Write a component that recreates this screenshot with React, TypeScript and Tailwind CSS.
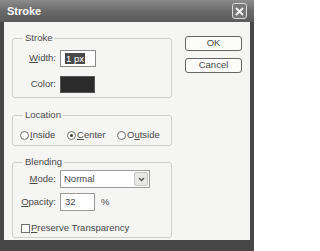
import type { ReactNode } from "react";

const FONT = { fontFamily: '"Liberation Sans", Arial, sans-serif' };
const FIELDSET = "rounded-[3px] border border-[#cdcdca] px-0";
const LEGEND = "ml-[10px] px-[2px] leading-[12px] text-[#4a4a4a]";
const LABEL = "w-[43px] shrink-0 text-right";

function U({ children }: { children: ReactNode }) {
  return <span className="underline decoration-[1px] underline-offset-[1px]">{children}</span>;
}

function Radio({ on }: { on?: boolean }) {
  return (
    <span className="flex h-[9px] w-[9px] shrink-0 items-center justify-center rounded-full border border-[#707070] bg-white">
      {on && <span className="h-[3px] w-[3px] rounded-full bg-[#3a3a3a]" />}
    </span>
  );
}

function Button({ children }: { children: ReactNode }) {
  return (
    <button className="flex h-[15px] w-[57px] items-center justify-center rounded-[3px] border border-[#666] bg-[#fbfbfa] text-[#4a4a4a]">
      {children}
    </button>
  );
}

export default function App() {
  return (
    <div
      style={FONT}
      className="flex h-[251px] w-[254px] flex-col bg-[#474747] px-[4px] pb-[11px] text-[9.5px] text-[#474747]"
    >
      {/* title bar */}
      <div className="-mx-[4px] flex h-[22px] shrink-0 items-center justify-between bg-gradient-to-b from-[#8c8c8c] via-[#6a6a6a] to-[#5a5a5a] pl-[7px] pr-[7px]">
        <span className="text-[11px] font-bold text-white">Stroke</span>
        <span className="flex h-[16px] w-[15px] items-center justify-center rounded-[3px] border border-[#dcdcdc] bg-[#777]">
          <svg width="9" height="9" viewBox="0 0 9 9">
            <path d="M1 1 L8 8 M8 1 L1 8" stroke="#f4f4f4" strokeWidth="1.8" />
          </svg>
        </span>
      </div>

      {/* client area */}
      <div className="flex flex-1 bg-[#f5f5f3] pl-[8px] pt-[10px]">
        <div className="flex w-[160px] flex-col">
          <fieldset className={`${FIELDSET} pb-[4px]`}>
            <legend className={LEGEND}>Stroke</legend>
            <div className="mt-[6px] flex items-center gap-[4px]">
              <span className={LABEL}>
                <U>W</U>idth:
              </span>
              <span className="flex h-[17px] w-[36px] items-center border border-[#8a8a8a] bg-white pl-[4px]">
                <span className="bg-[#4a4a4a] px-[1px] leading-[11px] text-white">1 px</span>
              </span>
            </div>
            <div className="mt-[9px] flex items-center gap-[4px]">
              <span className={LABEL}>Color:</span>
              <span className="h-[17px] w-[35px] border border-[#555] bg-[#2b2b2b]" />
            </div>
          </fieldset>

          <fieldset className={`${FIELDSET} mt-[11px] pb-[4px]`}>
            <legend className={LEGEND}>Location</legend>
            <div className="mt-[8px] flex h-[12px] items-center pl-[7px]">
              <label className="flex w-[47px] items-center gap-[1px]">
                <Radio />
                <span>
                  <U>I</U>nside
                </span>
              </label>
              <label className="flex w-[50px] items-center gap-[1px]">
                <Radio on />
                <span>
                  <U>C</U>enter
                </span>
              </label>
              <label className="flex items-center gap-[1px]">
                <Radio />
                <span>
                  O<U>u</U>tside
                </span>
              </label>
            </div>
          </fieldset>

          <fieldset className={`${FIELDSET} mt-[10px] pb-[3px]`}>
            <legend className={LEGEND}>Blending</legend>
            <div className="mt-[2px] flex items-center gap-[4px]">
              <span className={LABEL}>
                <U>M</U>ode:
              </span>
              <span className="flex h-[18px] w-[90px] items-center justify-between border border-[#9a9a9a] bg-white pl-[3px] pr-[1px]">
                <span>Normal</span>
                <span className="flex h-[14px] w-[14px] items-center justify-center rounded-[2px] border border-[#c4c4c4] bg-[#e8e8e6]">
                  <svg width="7" height="5" viewBox="0 0 7 5">
                    <path d="M1 1 L3.5 3.5 L6 1" fill="none" stroke="#555" strokeWidth="1.4" />
                  </svg>
                </span>
              </span>
            </div>
            <div className="mt-[5px] flex items-center gap-[4px]">
              <span className={LABEL}>
                <U>O</U>pacity:
              </span>
              <span className="flex h-[18px] w-[35px] items-center border border-[#9a9a9a] bg-white pl-[4px]">32</span>
              <span className="ml-[2px]">%</span>
            </div>
            <div className="mt-[11px] flex h-[12px] items-center gap-[1px] pl-[8px]">
              <span className="h-[9px] w-[9px] border border-[#707070] bg-white" />
              <span>
                <U>P</U>reserve Transparency
              </span>
            </div>
          </fieldset>
        </div>

        <div className="ml-[13px] flex flex-col gap-[7px] pt-[4px]">
          <Button>OK</Button>
          <Button>Cancel</Button>
        </div>
      </div>
    </div>
  );
}
